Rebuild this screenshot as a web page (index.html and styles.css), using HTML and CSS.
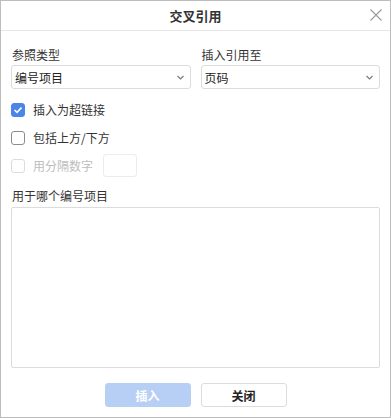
FILE: index.html
```html
<!DOCTYPE html>
<html lang="zh-CN">

<head>
    <meta charset="UTF-8">
    <meta name="viewport" content="width=device-width, initial-scale=1.0">
    <title>交叉引用</title>
    <link rel="stylesheet" href="styles.css">
</head>

<body>
    <div class="dialog">
        <div class="header">
            <span class="title">交叉引用</span>
            <span class="close">
                <svg width="12" height="12" viewBox="0 0 12 12">
                    <path d="M0.5 0.5 L11.5 11.5 M11.5 0.5 L0.5 11.5" stroke="#9a9a9a" stroke-width="1.1" fill="none" />
                </svg>
            </span>
        </div>

        <div class="content">
            <div class="columns">
                <div class="field">
                    <div class="label">参照类型</div>
                    <div class="select">
                        <span>编号项目</span>
                        <svg class="chevron" width="7" height="5" viewBox="0 0 7 5">
                            <path d="M0.5 1 L3.5 4 L6.5 1" stroke="#777" stroke-width="1.1" fill="none" />
                        </svg>
                    </div>
                </div>
                <div class="field">
                    <div class="label">插入引用至</div>
                    <div class="select">
                        <span>页码</span>
                        <svg class="chevron" width="7" height="5" viewBox="0 0 7 5">
                            <path d="M0.5 1 L3.5 4 L6.5 1" stroke="#777" stroke-width="1.1" fill="none" />
                        </svg>
                    </div>
                </div>
            </div>

            <div class="options">
                <div class="check-row">
                    <span class="box checked">
                        <svg width="10" height="8" viewBox="0 0 10 8">
                            <path d="M1.5 4 L4 6.3 L8.5 1.6" stroke="#fff" stroke-width="1.6" fill="none" />
                        </svg>
                    </span>
                    <span>插入为超链接</span>
                </div>
                <div class="check-row">
                    <span class="box"></span>
                    <span>包括上方/下方</span>
                </div>
                <div class="check-row disabled">
                    <span class="box"></span>
                    <span>用分隔数字</span>
                    <span class="small-input"></span>
                </div>
            </div>

            <div class="label list-label">用于哪个编号项目</div>
            <div class="list"></div>

            <div class="buttons">
                <button class="btn primary">插入</button>
                <button class="btn">关闭</button>
            </div>
        </div>
    </div>
</body>

</html>
```

FILE: styles.css
```css
body {
    margin: 0;
    font-family: "Noto Sans CJK SC", "Noto Sans", sans-serif;
    font-size: 12px;
    color: #333;
}

.dialog {
    width: 391px;
    height: 418px;
    box-sizing: border-box;
    border: 1px solid #bdbdbd;
    background-color: white;
}

.header {
    height: 29px;
    border-bottom: 1px solid #e6e6e6;
    display: flex;
    justify-content: center;
    align-items: center;
    position: relative;
}

.title {
    font-size: 13px;
    font-weight: bold;
    line-height: 16px;
    color: #333;
}

.close {
    position: absolute;
    right: 8px;
    top: 8px;
    width: 12px;
    height: 12px;
    display: flex;
}

.content {
    padding: 16px 10px 0 10px;
}

.columns {
    display: grid;
    grid-template-columns: 1fr 1fr;
    gap: 10px;
}

.label {
    line-height: 16px;
    margin-bottom: 2px;
    padding-left: 1px;
}

.select {
    height: 24px;
    box-sizing: border-box;
    border: 1px solid #dcdcdc;
    border-radius: 3px;
    display: flex;
    align-items: center;
    justify-content: space-between;
    padding: 0 6px 0 3px;
    font-size: 12px;
    color: #222;
}

.options {
    margin-top: 6px;
}

.check-row {
    height: 28px;
    display: flex;
    align-items: center;
    gap: 8px;
    color: #333;
}

.box {
    width: 14px;
    height: 14px;
    box-sizing: border-box;
    border: 1px solid #8c8c8c;
    border-radius: 3px;
    display: flex;
    justify-content: center;
    align-items: center;
    margin-top: 1px;
}

.box.checked {
    background-color: #4a86e8;
    border-color: #4a86e8;
}

.check-row.disabled {
    color: #bdbdbd;
}

.check-row.disabled .box {
    border-color: #dcdcdc;
}

.small-input {
    width: 34px;
    height: 23px;
    box-sizing: border-box;
    border: 1px solid #ececec;
    border-radius: 3px;
    margin-left: 2px;
}

.list-label {
    margin-top: 9px;
    margin-bottom: 3px;
}

.list {
    height: 161px;
    box-sizing: border-box;
    border: 1px solid #dcdcdc;
    border-radius: 2px;
}

.buttons {
    margin-top: 15px;
    display: flex;
    justify-content: center;
    gap: 10px;
}

.btn {
    width: 86px;
    height: 24px;
    box-sizing: border-box;
    border: 1px solid #dcdcdc;
    border-radius: 3px;
    background-color: white;
    font-family: "Noto Sans CJK SC", "Noto Sans", sans-serif;
    font-size: 12px;
    font-weight: bold;
    color: #222;
    padding: 0;
}

.btn.primary {
    background-color: #b7cff4;
    border-color: #b7cff4;
    color: white;
}
```
